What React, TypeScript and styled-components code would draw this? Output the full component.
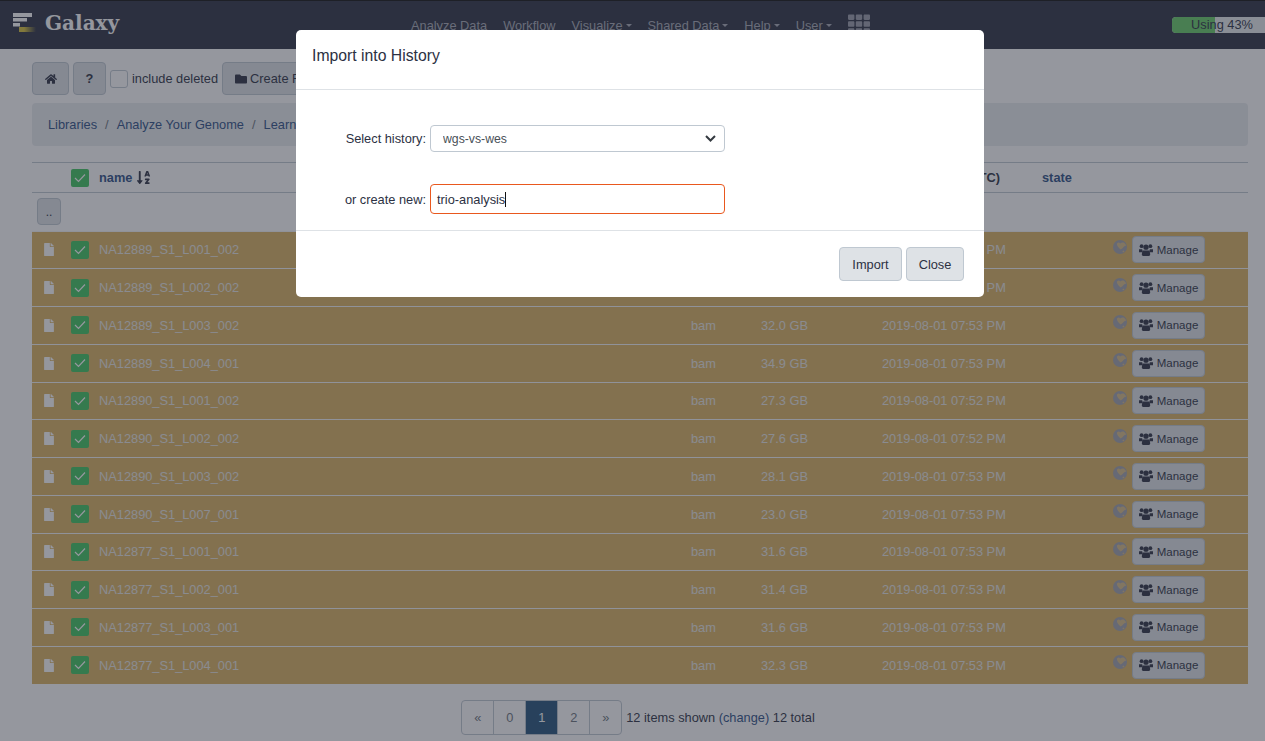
import React from "react";
import styled, { createGlobalStyle } from "styled-components";
import { FaFile, FaFolder, FaHome, FaSortAlphaDown, FaTh } from "react-icons/fa";

const files = [
  { name: "NA12889_S1_L001_002", size: "33.4 GB", time: "07:53 PM" },
  { name: "NA12889_S1_L002_002", size: "33.1 GB", time: "07:53 PM" },
  { name: "NA12889_S1_L003_002", size: "32.0 GB", time: "07:53 PM" },
  { name: "NA12889_S1_L004_001", size: "34.9 GB", time: "07:53 PM" },
  { name: "NA12890_S1_L001_002", size: "27.3 GB", time: "07:52 PM" },
  { name: "NA12890_S1_L002_002", size: "27.6 GB", time: "07:52 PM" },
  { name: "NA12890_S1_L003_002", size: "28.1 GB", time: "07:53 PM" },
  { name: "NA12890_S1_L007_001", size: "23.0 GB", time: "07:53 PM" },
  { name: "NA12877_S1_L001_001", size: "31.6 GB", time: "07:53 PM" },
  { name: "NA12877_S1_L002_001", size: "31.4 GB", time: "07:53 PM" },
  { name: "NA12877_S1_L003_001", size: "31.6 GB", time: "07:53 PM" },
  { name: "NA12877_S1_L004_001", size: "32.3 GB", time: "07:53 PM" },
];

const navItems = [
  { label: "Analyze Data", caret: false },
  { label: "Workflow", caret: false },
  { label: "Visualize", caret: true },
  { label: "Shared Data", caret: true },
  { label: "Help", caret: true },
  { label: "User", caret: true },
];

const GlobalStyle = createGlobalStyle`
  html, body {
    margin: 0;
    height: 100%;
    overflow: hidden;
    background: #fff;
    color: #2c3143;
    font-family: "Liberation Sans", Arial, sans-serif;
    font-size: 12.8px;
  }
  * { box-sizing: border-box; }
`;

const Page = styled.div`
  width: 1265px;
  height: 741px;
  overflow: hidden;
`;

const Masthead = styled.header`
  height: 49px;
  display: flex;
  align-items: flex-start;
  background: #2c3143;
  border-top: 1px solid #111;
`;

const Brand = styled.div`
  width: 411px;
  display: flex;
  align-items: center;
  gap: 9px;
  padding: 10px 0 0 13px;
  font: bold 20px "DejaVu Serif", serif;
  color: #fff;
`;

const Nav = styled.nav`
  display: flex;
  align-items: center;
  height: 48px;
  gap: 16px;
  padding-top: 1px;
  font-size: 12.8px;
  color: #a6a9b5;
`;

const NavItem = styled.span<{ $caret: boolean }>`
  display: flex;
  align-items: center;
  &::after {
    content: ${(p) => (p.$caret ? '""' : "none")};
    margin-left: 3px;
    border-top: 3px solid currentColor;
    border-left: 3px solid transparent;
    border-right: 3px solid transparent;
  }
`;

const AppsIcon = styled(FaTh)`
  width: 22px;
  height: 22px;
  margin-top: -3px;
  color: #9a9daa;
`;

const Quota = styled.div`
  position: relative;
  width: 100px;
  height: 16px;
  margin: 16px -7px 0 auto;
  flex: none;
  border-radius: 4px 0 0 4px;
  overflow: hidden;
  background: #e9ecef;
  color: #2c3143;
  line-height: 16px;
  text-align: center;
  font-size: 12.8px;
`;

const QuotaFill = styled.div`
  position: absolute;
  inset: 0 auto 0 0;
  background: #66cc66;
`;

const QuotaLabel = styled.span`
  position: relative;
`;

const Main = styled.main`
  padding: 13px 17px 0 32px;
`;

const Toolbar = styled.div`
  display: flex;
  align-items: center;
  gap: 4px;
  height: 33px;
`;

const Button = styled.button`
  display: inline-flex;
  align-items: center;
  justify-content: center;
  gap: 3px;
  height: 33px;
  padding: 0 12px;
  background: #dee2e6;
  border: 1px solid #bfc8d1;
  border-radius: 4px;
  color: #2c3143;
  font: inherit;
  font-size: 12.8px;
`;

const ToolButton = styled(Button) <{ $w: number }>`
  width: ${(p) => p.$w}px;
  padding: 0;
`;

const ModalButton = styled(ToolButton)`
  height: 34px;
`;

const EmptyBox = styled.span`
  width: 18px;
  height: 18px;
  background: #fff;
  border: 1px solid #bfc8d1;
  border-radius: 3px;
`;

const Breadcrumbs = styled.div`
  display: flex;
  align-items: center;
  gap: 8px;
  height: 43px;
  margin: 8px 0 16px;
  padding: 0 16px;
  background: #e9ecef;
  border-radius: 4px;
  color: #6c757d;
`;

const Crumb = styled.a`
  color: #2c4f85;
`;

const Row = styled.div`
  display: grid;
  grid-template-columns: 27px 28px 592px 70px 121px 160px 71px 1fr;
  align-items: center;
  padding-left: 12px;
`;

const HeadRow = styled(Row)`
  height: 31px;
  border-top: 1px solid #bfc8d1;
  border-bottom: 1px solid #bfc8d1;
  font-weight: bold;
`;

const HeadLink = styled.span`
  display: flex;
  align-items: center;
  gap: 4px;
  color: #2c4f85;
`;

const NoWrap = styled.span`
  white-space: nowrap;
`;

const ParentRow = styled.div`
  height: 37.5px;
  padding: 5px;
`;

const ParentButton = styled(Button)`
  width: 24px;
  height: 27px;
  padding: 0;
  font-size: 12px;
`;

const FileRow = styled(Row)`
  height: 37.75px;
  background: #dab361;
  border-top: 1px solid #f5f5f5;
  color: #e8e6e2;
`;

const Check = styled.span`
  display: flex;
  align-items: center;
  justify-content: center;
  width: 18px;
  height: 18px;
  background: #3ec45f;
  border-radius: 2px;
`;

const DocIcon = styled(FaFile)`
  width: 10px;
  height: 13px;
  color: #fff;
`;

const Actions = styled.div`
  display: flex;
  align-items: center;
  gap: 5px;
`;

const Globe = styled.svg`
  width: 14px;
  height: 14px;
  margin-top: -6px;
  flex: none;
`;

const ManageButton = styled(Button)`
  width: 73px;
  height: 27px;
  padding: 0;
  gap: 4px;
  font-size: 11.5px;
`;

const Footer = styled.div`
  display: flex;
  align-items: center;
  justify-content: center;
  gap: 4px;
  margin-top: 16px;
  padding-right: 4px;
`;

const Pager = styled.div`
  display: flex;
  height: 35px;
  border: 1px solid #bfc8d1;
  border-radius: 4px;
  overflow: hidden;
`;

const PageCell = styled.span<{ $active?: boolean }>`
  display: flex;
  align-items: center;
  justify-content: center;
  width: 32px;
  border-left: 1px solid #bfc8d1;
  background: ${(p) => (p.$active ? "#25537b" : "transparent")};
  color: ${(p) => (p.$active ? "#fff" : "#6c757d")};
  &:first-child { border-left: 0; width: 31px; }
`;

const Backdrop = styled.div`
  position: fixed;
  inset: 0;
  background: rgba(44, 47, 62, 0.5);
`;

const Modal = styled.div`
  position: fixed;
  top: 30px;
  left: 296px;
  width: 688px;
  height: 267px;
  display: flex;
  flex-direction: column;
  background: #fff;
  border-radius: 5px;
`;

const ModalHeader = styled.div`
  height: 60px;
  display: flex;
  align-items: center;
  padding: 0 16px 8px;
  border-bottom: 1px solid #dee2e6;
  font-size: 15.75px;
`;

const ModalBody = styled.div`
  flex: 1;
  display: flex;
  flex-direction: column;
  gap: 32px;
  padding: 35px 0 0 16px;
`;

const FormRow = styled.div`
  display: flex;
  align-items: center;
  gap: 4px;
`;

const Label = styled.label`
  width: 114px;
  text-align: right;
`;

const SelectWrap = styled.div`
  position: relative;
  width: 295px;
  height: 27px;
`;

const Select = styled.select`
  width: 100%;
  height: 100%;
  padding: 0 12px;
  appearance: none;
  background: #fff;
  border: 1px solid #bfc8d1;
  border-radius: 4px;
  color: #495057;
  font: inherit;
  font-size: 12.25px;
`;

const Chevron = styled.svg`
  position: absolute;
  top: 10px;
  right: 9px;
  width: 11px;
  height: 7px;
`;

const TextBox = styled.div`
  display: flex;
  align-items: center;
  width: 295px;
  height: 30px;
  padding: 0 6px;
  border: 1px solid #e9581e;
  border-radius: 4px;
  color: #2c3143;
`;

const Caret = styled.span`
  width: 1px;
  height: 15px;
  background: #111;
`;

const ModalFooter = styled.div`
  height: 67px;
  display: flex;
  justify-content: flex-end;
  align-items: flex-start;
  gap: 4px;
  padding: 16px 20px 0;
  border-top: 1px solid #dee2e6;
`;

const CheckMark = () => (
  <svg width="12" height="10" viewBox="0 0 12 10" fill="none" stroke="#fff" strokeWidth="1.2">
    <path d="M1 5l3.5 3.5L11 1.5" />
  </svg>
);

const GroupIcon = () => (
  <svg width="14" height="12" viewBox="0 0 14 12" fill="#2c3143">
    <circle cx="2.6" cy="2.2" r="1.9" />
    <circle cx="11.4" cy="2.2" r="1.9" />
    <circle cx="7" cy="3.2" r="2.6" />
    <path d="M0 5.2h3.2l.3 3H0zM10.8 5.2H14v3h-3.5z" />
    <path d="M3.4 6.4h7.2l.6 4.2c0 .8-.6 1.4-1.4 1.4H4.2c-.8 0-1.4-.6-1.4-1.4z" />
  </svg>
);

const GlobeIcon = () => (
  <Globe viewBox="0 0 14 14">
    <circle cx="7" cy="7" r="7" fill="#a0a2ad" />
    <path d="M4.2 3.2c1.2-1 2.2-.6 3 .2 1-.9 3-1.3 4.2-.4.8.8 1.6 1.8 1.8 2.6-.8.5-2 .6-2.6 1.4-.6.8-1.6 1.6-2.8 2.6-1.4-1.2-2.8-2.2-3.4-3.8-.3-.9-.7-1.8-.2-2.6z" fill="#d9bd85" />
    <path d="M9.4 11.2l1.6-.8.4 1-1.4 1z" fill="#d9bd85" />
  </Globe>
);

const App = () => (
  <Page>
    <GlobalStyle />
    <Masthead>
      <Brand>
        <svg width="23" height="20" viewBox="0 0 23 20">
          <defs>
            <linearGradient id="gold">
              <stop offset="0.3" stopColor="#d8c23a" />
              <stop offset="1" stopColor="#d8c23a" stopOpacity="0" />
            </linearGradient>
          </defs>
          <rect x="0" y="0" width="19" height="4" fill="#fff" />
          <rect x="0" y="5" width="14" height="3.5" fill="#fff" />
          <rect x="0" y="10" width="7" height="3.5" fill="#fff" />
          <rect x="6" y="14" width="17" height="5" fill="url(#gold)" />
        </svg>
        Galaxy
      </Brand>
      <Nav>
        {navItems.map((item) => (
          <NavItem key={item.label} $caret={item.caret}>{item.label}</NavItem>
        ))}
        <AppsIcon />
      </Nav>
      <Quota>
        <QuotaFill style={{ width: "43%" }} />
        <QuotaLabel>Using 43%</QuotaLabel>
      </Quota>
    </Masthead>

    <Main>
      <Toolbar>
        <ToolButton $w={37}><FaHome size={12} /></ToolButton>
        <ToolButton $w={33}><b>?</b></ToolButton>
        <EmptyBox />
        <span>include deleted</span>
        <Button><FaFolder size={12} />Create Folder</Button>
      </Toolbar>

      <Breadcrumbs>
        <Crumb>Libraries</Crumb>/<Crumb>Analyze Your Genome</Crumb>/<Crumb>Learn</Crumb>
      </Breadcrumbs>

      <HeadRow>
        <span />
        <Check><CheckMark /></Check>
        <HeadLink>name <FaSortAlphaDown size={15} color="#2c3143" /></HeadLink>
        <span />
        <span />
        <NoWrap>time updated (UTC)</NoWrap>
        <HeadLink>state</HeadLink>
      </HeadRow>

      <ParentRow><ParentButton>..</ParentButton></ParentRow>

      {files.map((file) => (
        <FileRow key={file.name}>
          <DocIcon />
          <Check><CheckMark /></Check>
          <span>{file.name}</span>
          <span>bam</span>
          <span>{file.size}</span>
          <span>2019-08-01 {file.time}</span>
          <span />
          <Actions>
            <GlobeIcon />
            <ManageButton><GroupIcon />Manage</ManageButton>
          </Actions>
        </FileRow>
      ))}

      <Footer>
        <Pager>
          <PageCell>«</PageCell>
          <PageCell>0</PageCell>
          <PageCell $active>1</PageCell>
          <PageCell>2</PageCell>
          <PageCell>»</PageCell>
        </Pager>
        <span>12 items shown <Crumb>(change)</Crumb> 12 total</span>
      </Footer>
    </Main>

    <Backdrop />
    <Modal>
      <ModalHeader>Import into History</ModalHeader>
      <ModalBody>
        <FormRow>
          <Label>Select history:</Label>
          <SelectWrap>
            <Select defaultValue="wgs-vs-wes"><option>wgs-vs-wes</option></Select>
            <Chevron viewBox="0 0 11 7" fill="none" stroke="#343a40" strokeWidth="2"><path d="M1 1l4.5 4.5L10 1" /></Chevron>
          </SelectWrap>
        </FormRow>
        <FormRow>
          <Label>or create new:</Label>
          <TextBox>trio-analysis<Caret /></TextBox>
        </FormRow>
      </ModalBody>
      <ModalFooter>
        <ModalButton $w={63}>Import</ModalButton>
        <ModalButton $w={58}>Close</ModalButton>
      </ModalFooter>
    </Modal>
  </Page>
);

export default App;
